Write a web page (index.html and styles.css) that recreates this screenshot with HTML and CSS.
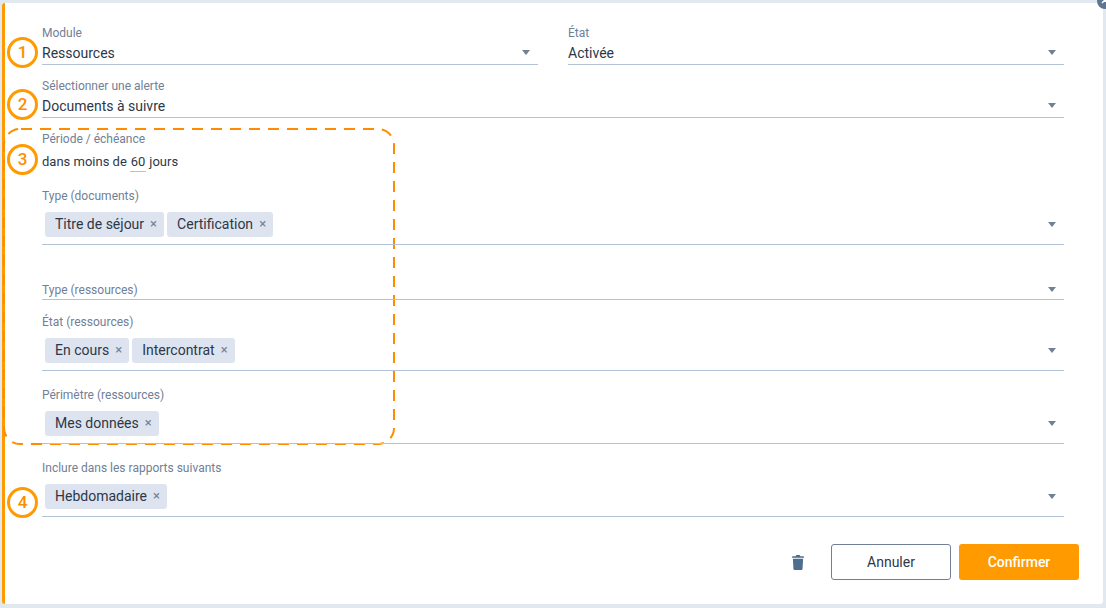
FILE: index.html
```html
<!DOCTYPE html>
<html lang="fr">
<head>
<meta charset="utf-8">
<title>Alerte</title>
<link rel="stylesheet" href="styles.css">
</head>
<body>
<main class="modal">
  <button class="close" aria-label="Fermer"><svg width="16" height="16" viewBox="0 0 16 16"><path d="M3 5l6 6M9 5l-6 6" transform="translate(2 -1)"/></svg></button>
  <svg class="dash-frame" width="400" height="325" viewBox="0 0 400 325"><rect x="1" y="1" width="390" height="315" rx="16" ry="16"/></svg>
  <span class="step step-1">1</span>
  <span class="step step-2">2</span>
  <span class="step step-3">3</span>
  <span class="step step-4">4</span>

  <form class="form">
    <div class="row">
      <div class="field">
        <div class="label">Module</div>
        <div class="control"><span class="value">Ressources</span><i class="caret"></i></div>
      </div>
      <div class="field">
        <div class="label">État</div>
        <div class="control"><span class="value">Activée</span><i class="caret"></i></div>
      </div>
    </div>
    <div class="field gap-13">
      <div class="label">Sélectionner une alerte</div>
      <div class="control"><span class="value">Documents à suivre</span><i class="caret"></i></div>
    </div>
    <div class="field gap-13">
      <div class="label">Période / échéance</div>
      <div class="period">dans moins de <span class="num">60</span> jours</div>
    </div>
    <div class="field gap-16">
      <div class="label">Type (documents)</div>
      <div class="control tags">
        <span class="tag">Titre de séjour<b class="x">×</b></span>
        <span class="tag">Certification<b class="x">×</b></span>
        <i class="caret"></i>
      </div>
    </div>
    <div class="field gap-37">
      <div class="control floating"><span class="label">Type (ressources)</span><i class="caret"></i></div>
    </div>
    <div class="field gap-14">
      <div class="label">État (ressources)</div>
      <div class="control tags">
        <span class="tag">En cours<b class="x">×</b></span>
        <span class="tag">Intercontrat<b class="x">×</b></span>
        <i class="caret"></i>
      </div>
    </div>
    <div class="field gap-16">
      <div class="label">Périmètre (ressources)</div>
      <div class="control tags">
        <span class="tag">Mes données<b class="x">×</b></span>
        <i class="caret"></i>
      </div>
    </div>
    <div class="field gap-16">
      <div class="label">Inclure dans les rapports suivants</div>
      <div class="control tags">
        <span class="tag">Hebdomadaire<b class="x">×</b></span>
        <i class="caret"></i>
      </div>
    </div>
    <div class="actions">
      <svg class="trash" width="12" height="15" viewBox="0 0 14 16" preserveAspectRatio="none"><path d="M5 0h4l.6 1.2H13.2c.4 0 .8.4.8.8v1H0V2c0-.4.4-.8.8-.8h3.6L5 0zM1 4h12l-.7 10.6c0 .8-.7 1.4-1.4 1.4H3.100c-.7 0-1.400-.6-1.400-1.400L1 4z"/></svg>
      <button type="button" class="btn btn-ghost">Annuler</button>
      <button type="button" class="btn btn-primary">Confirmer</button>
    </div>
  </form>
</main>
</body>
</html>
```
FILE: styles.css
```css
* { box-sizing: border-box; }
html, body { margin: 0; height: 100%; }
body {
  background: #e2e8f0;
  font-family: Roboto, "Liberation Sans", sans-serif;
  color: #2d3748;
  overflow: hidden;
}
.modal {
  position: relative;
  width: 1101px;
  height: 601px;
  margin: 3px 0 0 2px;
  background: #fff;
  border-left: 3px solid #ff9b00;
  border-radius: 3px;
}
.close {
  position: absolute;
  top: -10px;
  left: 1092px;
  width: 16px;
  height: 16px;
  padding: 0;
  border: 0;
  border-radius: 50%;
  background: #5f7690;
}
.close svg { display: block; fill: none; stroke: #fff; stroke-width: 1.5; }
.dash-frame {
  position: absolute;
  left: -2px;
  top: 125px;
  fill: none;
  stroke: #ff8c00;
  stroke-width: 2;
  stroke-dasharray: 11 8;
  stroke-dashoffset: 18;
}
.step {
  position: absolute;
  left: 2px;
  width: 31px;
  height: 31px;
  border: 3px solid #ff9b00;
  border-radius: 50%;
  background: #fff;
  color: #ff8c00;
  font-size: 17px;
  font-weight: 500;
  line-height: 25px;
  text-align: center;
}
.step-1 { top: 34px; }
.step-2 { top: 86px; }
.step-3 { top: 141px; }
.step-4 { top: 484px; }
.form {
  width: 1022px;
  margin-left: 37px;
  padding-top: 22px;
}
.row { display: flex; gap: 30px; }
.row .field { flex: 1; }
.gap-13 { margin-top: 13px; }
.gap-14 { margin-top: 14px; }
.gap-16 { margin-top: 16px; }
.gap-37 { margin-top: 37px; }
.label {
  font-size: 12px;
  line-height: 16px;
  color: #718096;
}
.control {
  position: relative;
  display: flex;
  align-items: center;
  height: 24px;
  border-bottom: 1px solid #b3c2d6;
}
.value { padding-top: 2px; font-size: 14px; line-height: 23px; }
.floating { height: 18px; padding-bottom: 2px; }
.tags {
  height: 41px;
  padding: 8px 0 7px 3px;
  gap: 3px;
}
.caret {
  margin-left: auto;
  margin-right: 8px;
  width: 0;
  height: 0;
  border-left: 4px solid transparent;
  border-right: 4px solid transparent;
  border-top: 5px solid #718096;
}
.period {
  margin-top: 4px;
  font-size: 13px;
  line-height: 21px;
}
.num {
  display: inline-block;
  border-bottom: 1px solid #b3c2d6;
  line-height: 18px;
  width: 16px;
  text-align: center;
}
.tag {
  display: inline-flex;
  align-items: center;
  height: 25px;
  padding: 0 6px 2px 10px;
  border-radius: 3px;
  background: #dde4ef;
  font-size: 14px;
}
.x {
  margin-left: 5px;
  font-weight: 400;
  font-size: 13px;
  width: 9px;
  text-align: center;
  color: #718096;
}
.actions {
  display: flex;
  justify-content: flex-end;
  align-items: center;
  margin-top: 27px;
  margin-right: -15px;
}
.trash { margin-right: 27px; fill: #4f6d8f; }
.btn {
  width: 120px;
  height: 36px;
  border-radius: 3px;
  font-family: inherit;
  font-size: 14px;
}
.btn-ghost { background: #fff; border: 1px solid #718096; color: #2d3748; }
.btn-primary { margin-left: 8px; background: #ff9b00; border: 0; color: #fff; font-weight: 500; }
```
